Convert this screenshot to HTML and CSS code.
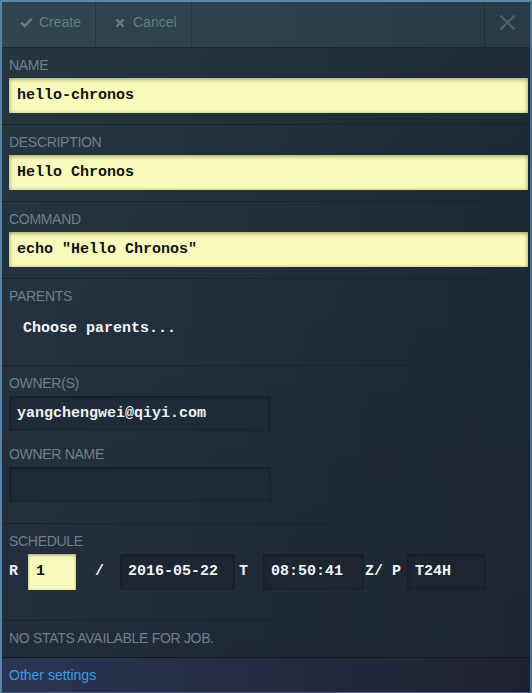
FILE: index.html
```html
<!DOCTYPE html>
<html>
<head>
<meta charset="utf-8">
<link rel="stylesheet" href="styles.css">
</head>
<body>
<div class="panel">
  <div class="toolbar">
    <div class="tbtn tbtn-create">
      <svg class="ico" width="13" height="11" viewBox="0 0 13 11"><path d="M1.2 5.6 L4.8 9 L11.8 1.6" fill="none" stroke="currentColor" stroke-width="2.6"/></svg>
      <span>Create</span>
    </div>
    <div class="tbtn tbtn-cancel">
      <svg class="ico" width="10" height="10" viewBox="0 0 10 10"><path d="M1.5 1.5 L8.5 8.5 M8.5 1.5 L1.5 8.5" fill="none" stroke="currentColor" stroke-width="2.4"/></svg>
      <span>Cancel</span>
    </div>
    <div class="tspacer"></div>
    <div class="tclose">
      <svg width="17" height="17" viewBox="0 0 17 17"><path d="M1.5 1.5 L15.5 15.5 M15.5 1.5 L1.5 15.5" fill="none" stroke="currentColor" stroke-width="2.2"/></svg>
    </div>
  </div>

  <div class="section">
    <div class="label">Name</div>
    <div class="field field-yellow">hello-chronos</div>
  </div>
  <div class="section">
    <div class="label">Description</div>
    <div class="field field-yellow">Hello Chronos</div>
  </div>
  <div class="section">
    <div class="label">Command</div>
    <div class="field field-yellow">echo "Hello Chronos"</div>
  </div>
  <div class="section section-parents">
    <div class="label">Parents</div>
    <div class="chooser">Choose parents...</div>
  </div>
  <div class="section section-owner">
    <div class="label">Owner(s)</div>
    <div class="field field-dark field-half">yangchengwei@qiyi.com</div>
    <div class="label label-gap">Owner name</div>
    <div class="field field-dark field-half"></div>
  </div>
  <div class="section section-schedule">
    <div class="label">Schedule</div>
    <div class="sched-row">
      <span class="sym sym-r">R</span>
      <span class="sbox sbox-yellow sbox-r">1</span>
      <span class="sym sym-slash">/</span>
      <span class="sbox sbox-dark sbox-date">2016-05-22</span>
      <span class="sym sym-t">T</span>
      <span class="sbox sbox-dark sbox-time">08:50:41</span>
      <span class="sym sym-zp">Z/ P</span>
      <span class="sbox sbox-dark sbox-period">T24H</span>
    </div>
  </div>
  <div class="section section-stats">
    <div class="label">No stats available for job.</div>
  </div>
  <div class="footer">
    <a class="link">Other settings</a>
  </div>
</div>
</body>
</html>
```

FILE: styles.css
```css
html, body {
  margin: 0;
  padding: 0;
  background: #1b1d28;
}
.panel {
  width: 532px;
  height: 693px;
  box-sizing: border-box;
  border-style: solid;
  border-width: 2px 2px 1px 2px;
  border-color: #5a89a7 #4e7090 #485e8c #5585a8;
  background:
    linear-gradient(to right, rgba(0,0,0,0), rgba(0,0,0,0.2)),
    linear-gradient(to bottom, #26373f, #232c3d);
  font-family: "Liberation Sans", Arial, sans-serif;
  display: flex;
  flex-direction: column;
  overflow: hidden;
}
.toolbar {
  display: flex;
  height: 45px;
  border-bottom: 1px solid #1c2a32;
  background: linear-gradient(to right, #2f4651, #283b46);
}
.tbtn {
  display: flex;
  align-items: center;
  height: 40px;
  padding-bottom: 5px;
  box-sizing: content-box;
  border-right: 1px solid #24363f;
  color: #687c86;
  font-size: 14px;
}
.tbtn-create {
  width: 75px;
  padding-left: 18px;
}
.tbtn-create .ico {
  margin-right: 6px;
  margin-top: 1px;
}
.tbtn-cancel {
  width: 76px;
  padding-left: 19px;
}
.tbtn-cancel .ico {
  margin-right: 8px;
  margin-top: 1px;
}
.tspacer {
  flex: 1;
}
.tclose {
  width: 45px;
  border-left: 1px solid #1f2f38;
  display: flex;
  align-items: center;
  justify-content: center;
  padding-bottom: 4px;
  color: #4d616b;
}
.section {
  padding: 8px 2px 11px 7px;
  border-bottom: 1px solid #1a242c;
}
.label {
  font-size: 14px;
  line-height: 18px;
  letter-spacing: -0.3px;
  color: #737e88;
  text-transform: uppercase;
}
.label-gap {
  margin-top: 14px;
}
.field {
  margin-top: 4px;
  height: 35px;
  line-height: 36px;
  padding-left: 8px;
  box-sizing: border-box;
  font-family: "Liberation Mono", "Courier New", monospace;
  font-weight: bold;
  font-size: 15px;
  white-space: pre;
}
.field-yellow {
  background: #f8fbbb;
  color: #111;
  box-shadow: inset 0 1px 4px rgba(60, 60, 0, 0.55);
}
.field-dark {
  background: #1f2b36;
  color: #eef2f4;
  box-shadow: inset 0 1px 4px rgba(0, 0, 0, 0.45);
  border-radius: 2px;
}
.field-half {
  width: 262px;
}
.section-parents {
  padding-bottom: 19px;
}
.chooser {
  margin-top: 6px;
  height: 35px;
  line-height: 35px;
  padding-left: 14px;
  font-family: "Liberation Mono", "Courier New", monospace;
  font-weight: bold;
  font-size: 15px;
  color: #f4f6f8;
}
.section-owner {
  padding-bottom: 21px;
}
.section-schedule {
  padding-bottom: 30px;
}
.sched-row {
  margin-top: 4px;
  display: flex;
  align-items: center;
  height: 36px;
  font-family: "Liberation Mono", "Courier New", monospace;
  font-weight: bold;
  font-size: 15px;
  color: #f0f3f5;
  white-space: pre;
}
.sym {
  line-height: 36px;
}
.sym-r { margin-right: 10px; }
.sym-slash { margin-left: 19px; margin-right: 16px; }
.sym-t { margin-left: 4px; margin-right: 15px; }
.sym-zp { margin-left: 1px; margin-right: 6px; }
.sbox {
  height: 36px;
  line-height: 36px;
  padding-left: 8px;
  box-sizing: border-box;
}
.sbox-yellow {
  background: #f8fbbb;
  color: #111;
  box-shadow: inset 0 1px 3px rgba(60, 60, 0, 0.5);
}
.sbox-dark {
  background: #1c2531;
  box-shadow: inset 0 1px 4px rgba(0, 0, 0, 0.4);
  border-radius: 3px;
}
.sbox-r { width: 48px; }
.sbox-date { width: 115px; }
.sbox-time { width: 101px; }
.sbox-period { width: 79px; }
.section-stats {
  padding-bottom: 10px;
  border-bottom-color: #15191f;
}
.footer {
  flex: 1;
  background: linear-gradient(to right, #2b3552, #1d2030);
  padding: 8px 7px 0 7px;
}
.link {
  font-size: 14px;
  line-height: 18px;
  color: #3a9de4;
  cursor: pointer;
}
```
